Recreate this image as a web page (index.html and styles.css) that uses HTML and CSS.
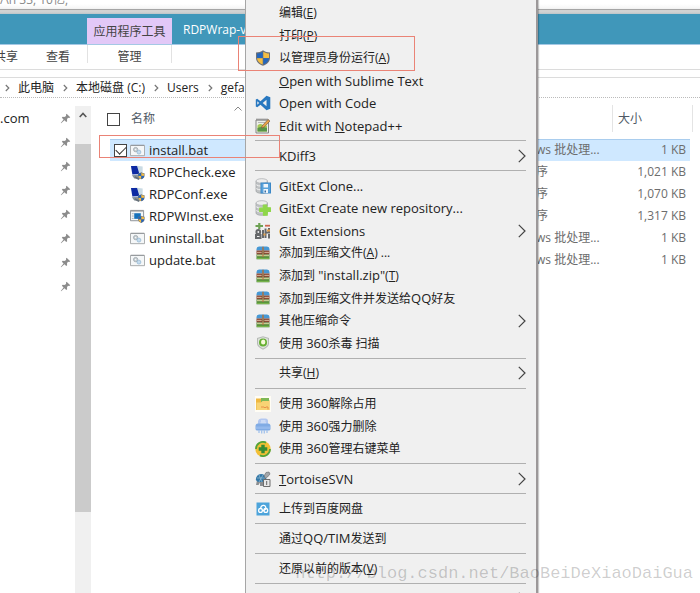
FILE: index.html
```html
<!DOCTYPE html>
<html lang="zh-CN">
<head>
<meta charset="utf-8">
<title>RDPWrap</title>
<link rel="stylesheet" href="styles.css">
</head>
<body>
<svg class="defs" aria-hidden="true">
  <symbol id="pin" viewBox="0 0 12 12"><path d="M7.2.8 11.2 4.6 10 5.4 8.6 5.2 7.6 7.2 7.8 9 6.8 9.8 4.9 7.9 1.2 11.2.8 10.8 3.9 7 2 5.2 2.9 4.2 4.8 4.4 6.7 3.2 6.5 1.8Z" fill="#8c8c8c"/></symbol>
  <symbol id="chev" viewBox="0 0 8 14"><path d="M.8.8 7 7 .8 13.2" fill="none" stroke="#444" stroke-width="1.2"/></symbol>
  <symbol id="sep" viewBox="0 0 5 8"><path d="M.8 1 3.8 4 .8 7" fill="none" stroke="#777" stroke-width="1.2"/></symbol>
  <symbol id="shield" viewBox="0 0 16 16"><path d="M8 .3C6 1.9 3.500 2.500 1 2.500V8c0 3.800 3 6.200 7 7.800 4-1.600 7-4 7-7.800V2.500C12.500 2.500 10 1.900 8 .3Z" fill="#6d7178"/><path d="M7.700 1.700C5.800 3 4 3.400 2 3.500V8h5.700Z" fill="#2366bd"/><path d="M8.300 1.700C10.200 3 12 3.400 14 3.500V8H8.300Z" fill="#f3bd43"/><path d="M2 8.300h5.700v6.300C4.500 13.200 2.200 11.200 2 8.300Z" fill="#f3bd43"/><path d="M14 8.300H8.300v6.300c3.200-1.400 5.500-3.400 5.700-6.300Z" fill="#2366bd"/></symbol>
  <symbol id="code" viewBox="0 0 16 16"><path d="M11.500.8 15.300 2.300V13.700L11.500 15.200 5.500 9.800 2.200 12.300.8 11.600V4.400L2.200 3.700 5.500 6.200ZM11.500 4.800 7.700 8 11.500 11.200ZM2.300 6.200V9.800L4.100 8Z" fill="#2878c0" fill-rule="evenodd"/></symbol>
  <symbol id="npp" viewBox="0 0 16 16"><path d="M1 2h12.500v13H1Z" fill="#eceee8" stroke="#858585"/><path d="M1.500 1.500h12" stroke="#777" stroke-width="2" stroke-dasharray="1 1"/><path d="M3 4.500h7" stroke="#b6b6b6"/><path d="M2.500 7.500Q5 5 8 7t4 0v6.500H2.500Z" fill="#a5c853"/><path d="M2.500 10q4-2 9.500 0v3.500H2.500Z" fill="#579448"/><path d="m7 8 6-6.500 2 1.500-6 6.200-2.500.8Z" fill="#e8a248" stroke="#70543a" stroke-width=".6"/></symbol>
  <symbol id="db" viewBox="0 0 16 16"><path d="M1 3v10c0 1.500 2.700 2.300 5.800 2.300s5.700-.8 5.700-2.300V3Z" fill="#bfc2c4" stroke="#9b9fa1" stroke-width=".7"/><ellipse cx="6.750" cy="3" rx="5.750" ry="2.300" fill="#ededed" stroke="#a8abad" stroke-width=".7"/><path d="M1.300 6.800c2 1.800 9 1.800 11 0M1.300 10.600c2 1.800 9 1.800 11 0" stroke="#f5f5f5" fill="none"/></symbol>
  <symbol id="clone" viewBox="0 0 16 16"><use href="#db"/><path d="M5.500 4.500H16V15.500H5.500Z" fill="#3c88c7"/><path d="M6.500 5.500H15V14.500H6.500Z" fill="#5aa2da"/><path d="M8.500 6h4.500v3.500H8.500ZM8.500 11h4.500v4H8.500Z" fill="#f0f5fa"/><path d="M9.500 12.500h1.500v2H9.500Z" fill="#356da1"/></symbol>
  <symbol id="create" viewBox="0 0 16 16"><use href="#db"/><path d="M8.300 5.200h3.400v2.600h3.800v3.500h-3.300v3.900H8.500v-3.700H4.700V8.200h3.600Z" fill="#8fd74a" stroke="#8fd74a" stroke-width="1.200" stroke-linejoin="round"/></symbol>
  <symbol id="gitext" viewBox="0 0 16 16"><path d="M.5 3h7.500M4.300 0v6" stroke="#6da253" stroke-width="2.200"/><path d="M10 2.700h5" stroke="#cd6750" stroke-width="1.800"/><g fill="none" stroke="#66686a" stroke-width="2"><circle cx="3.300" cy="9" r="1.900"/><path d="M1 12h4.500v3H1ZM8 7v8M10.500 5.500v9.500M14 5v4.500h-3M14 11v4.500"/></g><path d="M8.500 11.500h2M12 7.500h3" stroke="#e5a24c" stroke-width="1.800"/></symbol>
  <symbol id="zip" viewBox="0 0 16 16"><path d="M1.500 5.500V4q0-2.300 2.500-2.500h8q2.500.2 2.500 2.500v1.500Z" fill="#4798d4"/><path d="M1.500 5.500h13v4h-13Z" fill="#8c4a36"/><path d="M2 7.400h12" stroke="#d5b39a"/><path d="M1.500 9.500h13v4.800h-13Z" fill="#4f8b39"/><path d="M2 10.700h12" stroke="#e4d9a8"/><path d="M2 13.300h12" stroke="#83bd51"/><path d="M7.200 1.700h1.600V12H7.200Z" fill="#a5754b"/><path d="M6.700 6h2.600v3.500H6.700Z" fill="#6b4435"/><path d="M8 6v5" stroke="#dcbf78" stroke-width=".8"/></symbol>
  <symbol id="s360" viewBox="0 0 16 16"><path d="M8 1.300 14 3v5.500q0 3.500-6 6.200Q2 12 2 8.500V3Z" fill="#b6bab6"/><path d="M8 2.300 13 3.800v4.500q0 3-5 5.300-5-2.300-5-5.300V3.800Z" fill="#dde2dc"/><circle cx="8" cy="7.500" r="4" fill="#65af32"/><ellipse cx="8.200" cy="7" rx="2.200" ry="2.500" fill="#f6f9d9"/></symbol>
  <symbol id="unlock" viewBox="0 0 16 16"><path d="M0 0h16v16H0Z" fill="#fffdf5"/><path d="M1 2.500h5L8 4h6.500v10H1Z" fill="#efb840"/><path d="M6 2h8v4H6Z" fill="#7eb857"/><path d="M1.500 6.500H6L7.500 5h7v9h-13Z" fill="#f8d374"/><path d="M6 11h3l1 1 1-1h2v2.500" stroke="#e89149" fill="none"/></symbol>
  <symbol id="shred" viewBox="0 0 16 16"><path d="M3 6.500V3Q3.500.5 6 .5h4.500q2.500 0 2.500 2.500v3.500Z" fill="#b3c8f0"/><path d="M6 3h4.500M5.500 5h5.500" stroke="#e6eefb"/><path d="M.5 8q0-2.500 2.500-2.500h10q2.500 0 2.500 2.500v3q0 1.500-2 1.500h-11q-2 0-2-1.500Z" fill="#80abe4"/><path d="M1 8.500h14V11H1Z" fill="#94b9ec"/><path d="M4 12v3M6.700 12v3.500M9.300 12v3.500M12 12v3" stroke="#a2c2ec" stroke-width="1.300"/></symbol>
  <symbol id="menu360" viewBox="0 0 16 16"><circle cx="8" cy="8" r="7.700" fill="#f2bf35"/><path d="M1 8A7 7 0 0 1 11 1.600M15 8A7 7 0 0 1 5 14.400" fill="none" stroke="#52a43d" stroke-width="1.800"/><path d="M6.300 3.700h3.400v2.600h2.600v3.400H9.700v2.600H6.300V9.700H3.700V6.300h2.600Z" fill="#348c36"/></symbol>
  <symbol id="svn" viewBox="0 0 16 16"><path d="m2 9-1 5h2.500L5 11.500V15h4V9Z" fill="#8b8e91"/><path d="M.8 9Q1 3.500 6 3q4.500 0 5.500 5.500L9 11H3Z" fill="#3478a8"/><path d="M2 7h8M4 4l3 7M8 4 4 11" stroke="#8eb8ce" stroke-width=".8" fill="none"/><path d="M9 5 11 1.500l3-.5 1 2-2.500 3-2 1.500Z" fill="#a4a7aa" stroke="#626568" stroke-width=".6"/><path d="M8.500 8.500H15v7H8.500Z" fill="#e8e8e8" stroke="#6c6c6c"/><path d="M11.700 10v4" stroke="#666"/></symbol>
  <symbol id="baidu" viewBox="0 0 16 16"><path d="M1.500 1.500h13v13h-13Z" fill="#4da4db"/><g fill="none" stroke="#fff" stroke-width="1.300"><path d="M5.900 7.500a2.500 2.500 0 1 1 4.500.8L8 10"/><circle cx="5.500" cy="9.400" r="1.900"/><circle cx="10.800" cy="9.400" r="1.900"/></g></symbol>
  <symbol id="bat" viewBox="0 0 16 14"><path d="M.5 1.500h15v11H.5Z" fill="#f5f7f8" stroke="#a4a7a9"/><path d="M1 1.500h14" stroke="#8f9396"/><circle cx="6" cy="6" r="2.300" fill="#c8d0d4" stroke="#98a2a7" stroke-width=".8"/><circle cx="9.500" cy="8.700" r="2.100" fill="#c6dced" stroke="#91b6d1" stroke-width=".8"/><circle cx="6" cy="6" r=".7" fill="#fff"/></symbol>
  <symbol id="rdp" viewBox="0 0 16 16"><path d="M5 .5 13.500 1.500v9L5 9.500Z" fill="#cadbe4"/><path d="M1 1h6.500l2.500 8.500-7.500.5Z" fill="#0d2aa3"/><path d="m2 11 8-1 1.500 3-7 1.500Z" fill="#8794a0"/><path d="m5 13 5 2" stroke="#67717a" stroke-width="2"/><svg x="8" y="7" width="8" height="9" viewBox="0 0 16 16"><use href="#shield"/></svg></symbol>
  <symbol id="inst" viewBox="0 0 16 16"><path d="M.5 1.500h14v11H.5Z" fill="#f4f6f7" stroke="#8a8f94"/><path d="M1 2h13" stroke="#999" stroke-width="1.500"/><path d="M2 5h2M2 7.500h2M2 10h2" stroke="#a5aeb4"/><path d="M4.500 4.500h7v6h-7Z" fill="#1671bb"/><svg x="8" y="6" width="8" height="10" viewBox="0 0 16 16"><use href="#shield"/></svg></symbol>
</svg>

<div class="window">
  <div class="backdrop">/\n 33, 10亿,</div>
  <header class="titlebar">
    <span class="tool-tab">应用程序工具</span>
    <span class="caption">RDPWrap-v1.6.2</span>
  </header>
  <nav class="tabs">
    <button class="tab share">共享</button>
    <button class="tab view">查看</button>
    <button class="tab manage">管理</button>
  </nav>
  <nav class="address">
    <svg class="crumb-sep"><use href="#sep"/></svg><a href="#">此电脑</a>
    <svg class="crumb-sep"><use href="#sep"/></svg><a href="#">本地磁盘 (C:)</a>
    <svg class="crumb-sep"><use href="#sep"/></svg><a href="#">Users</a>
    <svg class="crumb-sep"><use href="#sep"/></svg><a href="#">gefa</a>
  </nav>
  <main class="body">
    <aside class="quick">
      <span class="site">.com</span>
      <ul class="pins">
        <li><svg><use href="#pin"/></svg></li><li><svg><use href="#pin"/></svg></li>
        <li><svg><use href="#pin"/></svg></li><li><svg><use href="#pin"/></svg></li>
        <li><svg><use href="#pin"/></svg></li><li><svg><use href="#pin"/></svg></li>
        <li><svg><use href="#pin"/></svg></li><li><svg><use href="#pin"/></svg></li>
      </ul>
    </aside>
    <div class="scroll">
      <svg class="up" viewBox="0 0 8 6"><path d="M.7 5 4 1.500 7.300 5" fill="none" stroke="#555" stroke-width="1.600"/></svg>
      <div class="thumb"></div>
    </div>
    <section class="files">
      <svg class="sort" viewBox="0 0 8 5"><path d="M.5 4.500 4 1l3.500 3.500" fill="none" stroke="#888"/></svg>
      <table>
        <thead>
          <tr><th class="check"><input type="checkbox" aria-label="全选"></th><th class="name">名称</th><th class="type"></th><th class="size">大小</th></tr>
        </thead>
        <tbody>
          <tr class="selected"><td class="check"><input type="checkbox" id="f1" checked></td><td class="name"><label for="f1"><svg><use href="#bat"/></svg>install.bat</label></td><td class="type">Windows 批处理...</td><td class="size">1 KB</td></tr>
          <tr><td></td><td class="name"><span class="file"><svg><use href="#rdp"/></svg>RDPCheck.exe</span></td><td class="type">应用程序</td><td class="size">1,021 KB</td></tr>
          <tr><td></td><td class="name"><span class="file"><svg><use href="#rdp"/></svg>RDPConf.exe</span></td><td class="type">应用程序</td><td class="size">1,070 KB</td></tr>
          <tr><td></td><td class="name"><span class="file"><svg><use href="#inst"/></svg>RDPWInst.exe</span></td><td class="type">应用程序</td><td class="size">1,317 KB</td></tr>
          <tr><td></td><td class="name"><span class="file"><svg><use href="#bat"/></svg>uninstall.bat</span></td><td class="type">Windows 批处理...</td><td class="size">1 KB</td></tr>
          <tr><td></td><td class="name"><span class="file"><svg><use href="#bat"/></svg>update.bat</span></td><td class="type">Windows 批处理...</td><td class="size">1 KB</td></tr>
        </tbody>
      </table>
    </section>
  </main>

  <div class="menu" role="menu">
    <button role="menuitem"><i></i><span>编辑(<u>E</u>)</span></button>
    <button role="menuitem"><i></i><span>打印(<u>P</u>)</span></button>
    <button role="menuitem"><svg><use href="#shield"/></svg><span>以管理员身份运行(<u>A</u>)</span></button>
    <button role="menuitem" class="en"><i></i><span><u>O</u>pen with Sublime Text</span></button>
    <button role="menuitem" class="en"><svg><use href="#code"/></svg><span>Open with Code</span></button>
    <button role="menuitem" class="en"><svg><use href="#npp"/></svg><span>Edit with <u>N</u>otepad++</span></button>
    <hr>
    <button role="menuitem" class="en"><i></i><span>KDiff3</span><svg class="more"><use href="#chev"/></svg></button>
    <hr>
    <button role="menuitem" class="en"><svg><use href="#clone"/></svg><span>GitExt Clone...</span></button>
    <button role="menuitem" class="en"><svg><use href="#create"/></svg><span>GitExt Create new repository...</span></button>
    <button role="menuitem" class="en"><svg><use href="#gitext"/></svg><span>Git Extensions</span><svg class="more"><use href="#chev"/></svg></button>
    <button role="menuitem"><svg><use href="#zip"/></svg><span>添加到压缩文件(<u>A</u>) ...</span></button>
    <button role="menuitem"><svg><use href="#zip"/></svg><span>添加到 <b>"install.zip"</b>(<u>T</u>)</span></button>
    <button role="menuitem"><svg><use href="#zip"/></svg><span>添加到压缩文件并发送给<b>QQ</b>好友</span></button>
    <button role="menuitem"><svg><use href="#zip"/></svg><span>其他压缩命令</span><svg class="more"><use href="#chev"/></svg></button>
    <button role="menuitem"><svg><use href="#s360"/></svg><span>使用 <b>360</b>杀毒 扫描</span></button>
    <hr>
    <button role="menuitem"><i></i><span>共享(<u>H</u>)</span><svg class="more"><use href="#chev"/></svg></button>
    <hr>
    <button role="menuitem"><svg><use href="#unlock"/></svg><span>使用 <b>360</b>解除占用</span></button>
    <button role="menuitem"><svg><use href="#shred"/></svg><span>使用 <b>360</b>强力删除</span></button>
    <button role="menuitem"><svg><use href="#menu360"/></svg><span>使用 <b>360</b>管理右键菜单</span></button>
    <hr>
    <button role="menuitem" class="en"><svg><use href="#svn"/></svg><span><u>T</u>ortoiseSVN</span><svg class="more"><use href="#chev"/></svg></button>
    <hr>
    <button role="menuitem"><svg><use href="#baidu"/></svg><span>上传到百度网盘</span></button>
    <hr>
    <button role="menuitem"><i></i><span>通过<b>QQ/TIM</b>发送到</span></button>
    <hr>
    <button role="menuitem"><i></i><span>还原以前的版本(<u>V</u>)</span></button>
    <hr>
    <button role="menuitem" aria-label="子菜单"><i></i><span></span><svg class="more"><use href="#chev"/></svg></button>
  </div>

  <div class="mark mark-run"></div>
  <div class="mark mark-file"></div>
  <div class="watermark">http://blog.csdn.net/BaoBeiDeXiaoDaiGua</div>
</div>
</body>
</html>
```
FILE: styles.css
```css
* { box-sizing: border-box; }
body {
  margin: 0;
  background: #fff;
  color: #222;
  font: 12px/16px "Open Sans", "Noto Sans CJK SC", sans-serif;
}
button, input { font: inherit; color: inherit; }
.defs { position: absolute; width: 0; height: 0; }
.window {
  position: relative;
  display: flex;
  flex-direction: column;
  height: 100vh;
  overflow: hidden;
}
.backdrop {
  flex: none;
  height: 14px;
  overflow: hidden;
  line-height: 0;
  color: #888;
  background: linear-gradient(#fff 0 4px, #f6f6f6 8px, #f0f0f0 9px, #a5a5a5 9px 10px, #d2d2d2 10px 12px, #bbc4c8 14px);
}
.titlebar {
  flex: none;
  display: flex;
  align-items: flex-end;
  height: 31px;
  padding-left: 87px;
  background: #4097ba;
  border-bottom: 1px solid #a4c8e4;
}
.tool-tab {
  width: 85px;
  height: 26px;
  line-height: 28px;
  text-align: center;
  color: #444;
  background: #e2c8f7;
}
.caption { padding-left: 11px; line-height: 28px; color: #fff; }
.tabs {
  flex: none;
  display: flex;
  height: 25px;
  border-bottom: 1px solid #dcdcdc;
}
.tab { padding: 0; border: 0; background: none; color: #444; line-height: 24px; }
.share { width: 24px; margin-left: -6px; }
.view { width: 24px; margin: 0 17px 0 28px; }
.manage {
  width: 85px;
  background:
    linear-gradient(#e2e2e2, #e2e2e2) left top / 1px 18px no-repeat,
    linear-gradient(#e2e2e2, #e2e2e2) right top / 1px 18px no-repeat;
}
.address {
  flex: none;
  display: flex;
  align-items: center;
  height: 21px;
  margin-top: 7px;
  padding-left: 5px;
  border-top: 1px solid #dcdcdc;
  border-bottom: 1px dotted #bbb;
}
.address a { margin: 0 9px 0 8px; color: #222; text-decoration: none; }
.crumb-sep { width: 5px; height: 8px; }
.body { flex: 1; display: flex; min-height: 0; }
.quick { display: flex; justify-content: space-between; width: 75px; padding-top: 8px; }
.site { line-height: 24px; font-size: 13px; }
.pins { margin: 0 4px 0 0; padding: 0; list-style: none; }
.pins li { display: flex; align-items: center; height: 24px; }
.pins svg { width: 11px; height: 11px; }
.scroll { width: 16px; margin-top: 8px; background: #f0f0f0; }
.up { display: block; width: 8px; height: 6px; margin: 6px 4px 26px; }
.thumb { height: 368px; background: #cbcbcb; }
.files {
  position: relative;
  flex: 1;
  padding: 0 10px 0 19px;
  background: linear-gradient(#e4e4e4, #e4e4e4) right 7px top 7px / 1px 27px no-repeat;
}
.sort { position: absolute; left: 143px; top: 8px; width: 8px; height: 5px; }
table { width: 100%; border-collapse: collapse; table-layout: fixed; }
th { height: 41px; padding: 2px 0 0; font-weight: 400; text-align: left; color: #4f5965; }
td { height: 22px; padding: 0; color: #6d6d6d; }
.name, th.name { padding-left: 1px; }
th.check { width: 20px; }
th.type { width: 112px; }
th.size {
  width: 78px;
  padding-left: 6px;
  background: linear-gradient(#e4e4e4, #e4e4e4) left 7px / 1px 27px no-repeat;
}
td.size { padding-right: 4px; text-align: right; }
td.check { padding-left: 4px; }
td.name { padding-left: 0; color: #222; font-size: 13px; }
td label, .file { display: flex; align-items: center; gap: 4px; }
td svg { flex: none; width: 15px; height: 15px; }
.selected td { background: #cfe8ff; border-top: 1px solid #a9cdee; }
input[type="checkbox"] {
  appearance: none;
  display: block;
  width: 13px;
  height: 13px;
  margin: 0;
  border: 1px solid #444;
  background: #fff;
}
th input[type="checkbox"] { margin-left: -3px; }
input[type="checkbox"]:checked::after {
  content: "";
  display: block;
  width: 9px;
  height: 5px;
  margin: 1px;
  border: solid #333;
  border-width: 0 0 1px 1px;
  transform: rotate(-45deg);
}
.menu {
  position: absolute;
  left: 245px;
  top: 0;
  width: 293px;
  height: calc(100vh + 17px);
  padding: 2px 10px 0 9px;
  display: flex;
  flex-direction: column;
  background: #f0f0f0;
  border-left: 1px solid #a6a6a6;
  border-right: 2px solid #9c9899;
  box-shadow: 1px 0 1px #0003;
}
.menu button {
  flex: 3 1 0;
  min-height: 0;
  display: flex;
  align-items: center;
  gap: 8px;
  padding: 0;
  border: 0;
  background: none;
  text-align: left;
  color: #222;
  white-space: nowrap;
}
.menu .en, .menu b { font-size: 13px; font-weight: 400; }
.menu i, .menu svg { flex: none; width: 16px; height: 16px; }
.menu span { flex: 1; }
.menu u { text-underline-offset: 1px; }
.menu .more { width: 8px; height: 14px; }
.menu hr {
  flex: 1 1 0;
  width: 100%;
  margin: 0;
  border: 0;
  background: linear-gradient(#b0b0b0, #b0b0b0) center / 100% 1px no-repeat;
}
.mark { position: absolute; border: 1px solid #ea8376; }
.mark-run { left: 238px; top: 36px; width: 177px; height: 35px; }
.mark-file { left: 99px; top: 135px; width: 181px; height: 23px; }
.watermark {
  position: absolute;
  right: 7px;
  bottom: 7px;
  font: 17px/24px "Liberation Mono", monospace;
  color: #0003;
}
```
